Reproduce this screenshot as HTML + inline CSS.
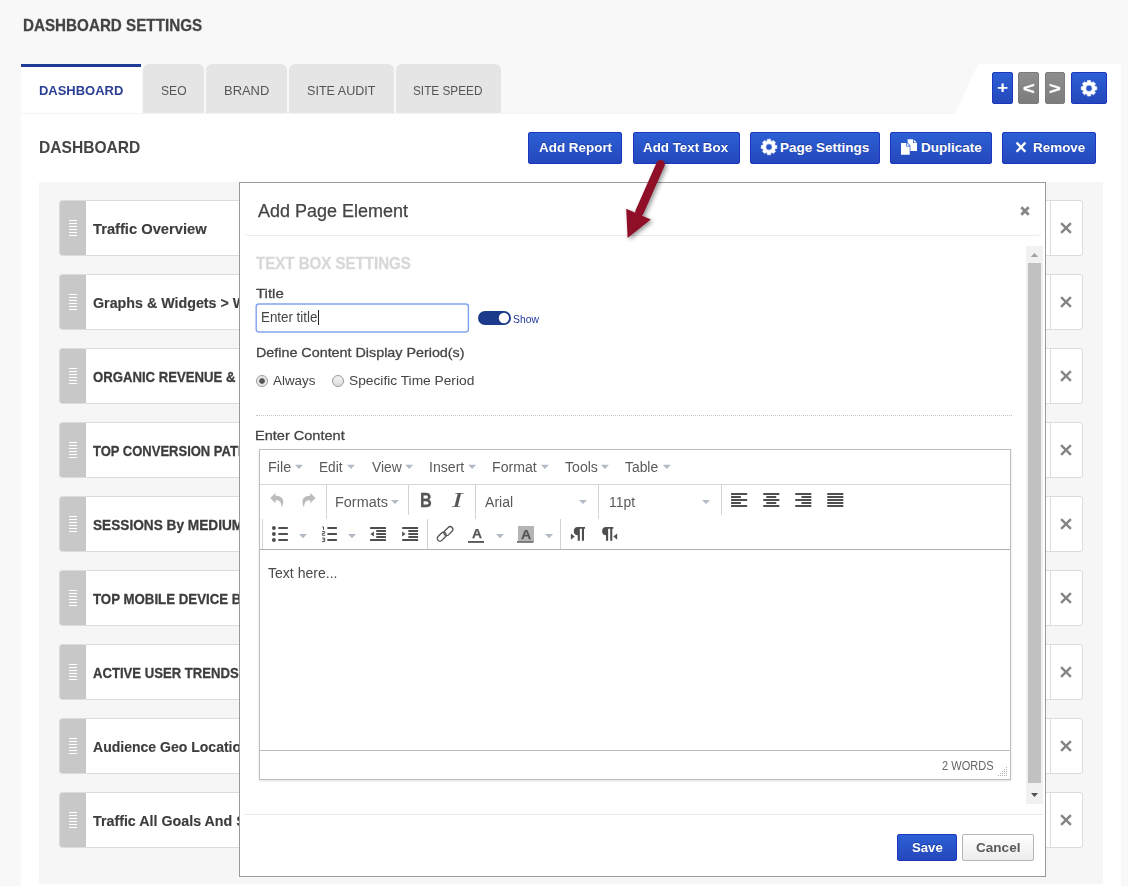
<!DOCTYPE html><html lang="en"><head><meta charset="utf-8"><title>Dashboard Settings</title><style>
html,body{margin:0;padding:0}
body{width:1128px;height:886px;background:#f8f8f8;position:relative;overflow:hidden;font-family:'Liberation Sans',Arial,sans-serif;font-size:13px;color:#444}
.t{position:absolute;white-space:pre;line-height:1;transform-origin:0 0;display:block}
.a{position:absolute;box-sizing:border-box}
.tab{position:absolute;top:64px;height:49px;background:#e5e5e5;border-radius:6px 6px 0 0}
.bb{position:absolute;box-sizing:border-box;border:1px solid #1c36c0;border-radius:2px;background:linear-gradient(#2d5fd5,#2448bb)}
.gb{position:absolute;box-sizing:border-box;border:1px solid #7b7b7b;border-radius:2px;background:linear-gradient(#8e8e8e,#7c7c7c)}
.row{position:absolute;left:59px;width:1024px;height:56px;box-sizing:border-box;background:#fff;border:1px solid #dcdcdc;border-radius:3px}
.row .h{position:absolute;left:0;top:0;width:26px;height:54px;background:#c8c8c8;border-radius:2px 0 0 2px}
.row .g{position:absolute;left:9px;top:19px;width:8px;height:16px;background:repeating-linear-gradient(#fff 0,#fff 1px,transparent 1px,transparent 3px)}
.row .c{position:absolute;right:31px;top:0;width:1px;height:54px;background:#dcdcdc}
svg{position:absolute;overflow:visible}
.sep{position:absolute;width:1px;background:#d2d3d6}
.sh{text-shadow:0 -1px 0 rgba(0,0,40,.28)}
.sb{-webkit-text-stroke:0.45px currentColor}
</style></head><body>
<span class="t" style="left:23.31px;top:17.30px;font-size:17px;font-weight:bold;color:#444;transform:scaleX(0.8946);-webkit-text-stroke:0.28px #444;">DASHBOARD SETTINGS</span>
<div class="a" style="left:21px;top:64px;width:120px;height:49px;background:#fff;border-top:3px solid #1e3c96"></div>
<div class="tab" style="left:143px;width:61px"></div>
<div class="tab" style="left:206px;width:81px"></div>
<div class="tab" style="left:289px;width:105px"></div>
<div class="tab" style="left:396px;width:105px"></div>
<span class="t" style="left:38.75px;top:84.30px;font-size:13px;font-weight:bold;color:#2a3f94;transform:scaleX(0.9970);">DASHBOARD</span>
<span class="t" style="left:160.60px;top:84.30px;font-size:13px;color:#555;transform:scaleX(0.9308);">SEO</span>
<span class="t" style="left:224.00px;top:84.30px;font-size:13px;color:#555;transform:scaleX(0.9955);">BRAND</span>
<span class="t" style="left:306.77px;top:84.30px;font-size:13px;color:#555;transform:scaleX(0.9677);">SITE AUDIT</span>
<span class="t" style="left:413.12px;top:84.30px;font-size:13px;color:#555;transform:scaleX(0.9063);">SITE SPEED</span>
<div class="a" style="left:21px;top:113px;width:1100px;height:773px;background:#fff;border-top:1px solid #f4f4f4"></div>
<div class="a" style="left:955px;top:64px;width:166px;height:50px;background:#fff;clip-path:polygon(23px 0,100% 0,100% 100%,0 100%)"></div>
<div class="bb" style="left:992px;top:72px;width:21px;height:32px"></div>
<div class="gb" style="left:1018px;top:72px;width:21px;height:32px"></div>
<div class="gb" style="left:1045px;top:72px;width:20px;height:32px"></div>
<div class="bb" style="left:1071px;top:72px;width:36px;height:32px"></div>
<span class="t" style="left:996.85px;top:78.70px;font-size:17px;font-weight:bold;color:#fff;transform:scaleX(1.1294);">+</span>
<span class="t" style="left:1023.11px;top:80.00px;font-size:17px;font-weight:bold;color:#fff;transform:scaleX(1.1889);-webkit-text-stroke:0.3px #fff;">&lt;</span>
<span class="t" style="left:1049.01px;top:80.00px;font-size:17px;font-weight:bold;color:#fff;transform:scaleX(1.1889);-webkit-text-stroke:0.3px #fff;">&gt;</span>
<span class="t" style="left:38.65px;top:138.90px;font-size:17px;font-weight:bold;color:#444;transform:scaleX(0.9171);">DASHBOARD</span>
<div class="bb" style="left:528px;top:132px;width:94px;height:32px"></div>
<div class="bb" style="left:633px;top:132px;width:107px;height:32px"></div>
<div class="bb" style="left:750px;top:132px;width:130px;height:32px"></div>
<div class="bb" style="left:890px;top:132px;width:102px;height:32px"></div>
<div class="bb" style="left:1002px;top:132px;width:94px;height:32px"></div>
<span class="t" style="left:538.65px;top:140.50px;font-size:13.5px;font-weight:bold;color:#fff;transform:scaleX(0.9945);text-shadow:0 -1px 0 rgba(0,0,40,.28);">Add Report</span>
<span class="t" style="left:643.35px;top:140.50px;font-size:13.5px;font-weight:bold;color:#fff;transform:scaleX(0.9895);text-shadow:0 -1px 0 rgba(0,0,40,.28);">Add Text Box</span>
<span class="t" style="left:780.10px;top:140.50px;font-size:13.5px;font-weight:bold;color:#fff;text-shadow:0 -1px 0 rgba(0,0,40,.28);">Page Settings</span>
<span class="t" style="left:921.10px;top:140.50px;font-size:13.5px;font-weight:bold;color:#fff;text-shadow:0 -1px 0 rgba(0,0,40,.28);">Duplicate</span>
<span class="t" style="left:1033.40px;top:140.50px;font-size:13.5px;font-weight:bold;color:#fff;transform:scaleX(0.9961);text-shadow:0 -1px 0 rgba(0,0,40,.28);">Remove</span>
<svg width="1128" height="886" style="left:0;top:0;pointer-events:none"><path d="M1087.24 82.25 L1087.46 80.55 L1090.54 80.55 L1090.76 82.25 L1092.04 82.78 L1093.39 81.73 L1095.57 83.91 L1094.52 85.26 L1095.05 86.54 L1096.75 86.76 L1096.75 89.84 L1095.05 90.06 L1094.52 91.34 L1095.57 92.69 L1093.39 94.87 L1092.04 93.82 L1090.76 94.35 L1090.54 96.05 L1087.46 96.05 L1087.24 94.35 L1085.96 93.82 L1084.61 94.87 L1082.43 92.69 L1083.48 91.34 L1082.95 90.06 L1081.25 89.84 L1081.25 86.76 L1082.95 86.54 L1083.48 85.26 L1082.43 83.91 L1084.61 81.73 L1085.96 82.78Z M1085.80 88.30 a3.2 3.2 0 1 0 6.4 0 a3.2 3.2 0 1 0 -6.4 0Z" fill="#fff" fill-rule="evenodd" stroke="#fff" stroke-width="0.6" stroke-linejoin="round"/><path d="M767.24 140.95 L767.46 139.25 L770.54 139.25 L770.76 140.95 L772.04 141.48 L773.39 140.43 L775.57 142.61 L774.52 143.96 L775.05 145.24 L776.75 145.46 L776.75 148.54 L775.05 148.76 L774.52 150.04 L775.57 151.39 L773.39 153.57 L772.04 152.52 L770.76 153.05 L770.54 154.75 L767.46 154.75 L767.24 153.05 L765.96 152.52 L764.61 153.57 L762.43 151.39 L763.48 150.04 L762.95 148.76 L761.25 148.54 L761.25 145.46 L762.95 145.24 L763.48 143.96 L762.43 142.61 L764.61 140.43 L765.96 141.48Z M765.80 147.00 a3.2 3.2 0 1 0 6.4 0 a3.2 3.2 0 1 0 -6.4 0Z" fill="#fff" fill-rule="evenodd" stroke="#fff" stroke-width="0.6" stroke-linejoin="round"/><path d="M901 143h5.3v3.6h3.4v8.2h-8.7z M907.1 143.1l2.5 2.7h-2.5z" fill="#fff"/><path d="M907.6 139.3h5.4v3.6h4v8h-6.6v-5.3l-2.8-3z M913.8 139.4l3 3h-3z" fill="#fff"/><path d="M1016.6 142.6l8.8 9.2M1025.4 142.6l-8.8 9.2" stroke="#fff" stroke-width="2.3" fill="none"/></svg>
<div class="a" style="left:39px;top:182px;width:1064px;height:702px;background:#f6f6f6"></div>
<div class="row" style="top:200px"><div class="h"><div class="g"></div></div><div class="c"></div><svg width="12" height="12" style="right:9.8px;top:21.4px" viewBox="0 0 12 12"><path d="M1.1 1.1l9.8 9.8M10.9 1.1L1.1 10.9" stroke="#858585" stroke-width="2.4" fill="none"/></svg></div>
<span class="t" style="left:93.20px;top:220.80px;font-size:15.2px;font-weight:bold;color:#3d3d3d;transform:scaleX(0.9685);-webkit-text-stroke:0.15px #3d3d3d;">Traffic Overview</span>
<div class="row" style="top:274px"><div class="h"><div class="g"></div></div><div class="c"></div><svg width="12" height="12" style="right:9.8px;top:21.4px" viewBox="0 0 12 12"><path d="M1.1 1.1l9.8 9.8M10.9 1.1L1.1 10.9" stroke="#858585" stroke-width="2.4" fill="none"/></svg></div>
<span class="t" style="left:92.73px;top:294.80px;font-size:15.2px;font-weight:bold;color:#3d3d3d;transform:scaleX(0.9394);-webkit-text-stroke:0.15px #3d3d3d;">Graphs &amp; Widgets &gt; Widgets</span>
<div class="row" style="top:348px"><div class="h"><div class="g"></div></div><div class="c"></div><svg width="12" height="12" style="right:9.8px;top:21.4px" viewBox="0 0 12 12"><path d="M1.1 1.1l9.8 9.8M10.9 1.1L1.1 10.9" stroke="#858585" stroke-width="2.4" fill="none"/></svg></div>
<span class="t" style="left:92.75px;top:369.80px;font-size:14.7px;font-weight:bold;color:#3d3d3d;transform:scaleX(0.8954);-webkit-text-stroke:0.3px #3d3d3d;">ORGANIC REVENUE &amp; CONVERSIONS</span>
<div class="row" style="top:422px"><div class="h"><div class="g"></div></div><div class="c"></div><svg width="12" height="12" style="right:9.8px;top:21.4px" viewBox="0 0 12 12"><path d="M1.1 1.1l9.8 9.8M10.9 1.1L1.1 10.9" stroke="#858585" stroke-width="2.4" fill="none"/></svg></div>
<span class="t" style="left:93.20px;top:443.80px;font-size:14.7px;font-weight:bold;color:#3d3d3d;transform:scaleX(0.8849);-webkit-text-stroke:0.3px #3d3d3d;">TOP CONVERSION PATHS</span>
<div class="row" style="top:496px"><div class="h"><div class="g"></div></div><div class="c"></div><svg width="12" height="12" style="right:9.8px;top:21.4px" viewBox="0 0 12 12"><path d="M1.1 1.1l9.8 9.8M10.9 1.1L1.1 10.9" stroke="#858585" stroke-width="2.4" fill="none"/></svg></div>
<span class="t" style="left:92.97px;top:517.80px;font-size:14.7px;font-weight:bold;color:#3d3d3d;transform:scaleX(0.9293);-webkit-text-stroke:0.3px #3d3d3d;">SESSIONS By MEDIUM</span>
<div class="row" style="top:570px"><div class="h"><div class="g"></div></div><div class="c"></div><svg width="12" height="12" style="right:9.8px;top:21.4px" viewBox="0 0 12 12"><path d="M1.1 1.1l9.8 9.8M10.9 1.1L1.1 10.9" stroke="#858585" stroke-width="2.4" fill="none"/></svg></div>
<span class="t" style="left:93.20px;top:591.80px;font-size:14.7px;font-weight:bold;color:#3d3d3d;transform:scaleX(0.9032);-webkit-text-stroke:0.3px #3d3d3d;">TOP MOBILE DEVICE BRANDS</span>
<div class="row" style="top:644px"><div class="h"><div class="g"></div></div><div class="c"></div><svg width="12" height="12" style="right:9.8px;top:21.4px" viewBox="0 0 12 12"><path d="M1.1 1.1l9.8 9.8M10.9 1.1L1.1 10.9" stroke="#858585" stroke-width="2.4" fill="none"/></svg></div>
<span class="t" style="left:92.98px;top:665.80px;font-size:14.7px;font-weight:bold;color:#3d3d3d;transform:scaleX(0.8923);-webkit-text-stroke:0.3px #3d3d3d;">ACTIVE USER TRENDS</span>
<div class="row" style="top:718px"><div class="h"><div class="g"></div></div><div class="c"></div><svg width="12" height="12" style="right:9.8px;top:21.4px" viewBox="0 0 12 12"><path d="M1.1 1.1l9.8 9.8M10.9 1.1L1.1 10.9" stroke="#858585" stroke-width="2.4" fill="none"/></svg></div>
<span class="t" style="left:92.97px;top:738.80px;font-size:15.2px;font-weight:bold;color:#3d3d3d;transform:scaleX(0.9235);-webkit-text-stroke:0.15px #3d3d3d;">Audience Geo Location</span>
<div class="row" style="top:792px"><div class="h"><div class="g"></div></div><div class="c"></div><svg width="12" height="12" style="right:9.8px;top:21.4px" viewBox="0 0 12 12"><path d="M1.1 1.1l9.8 9.8M10.9 1.1L1.1 10.9" stroke="#858585" stroke-width="2.4" fill="none"/></svg></div>
<span class="t" style="left:93.20px;top:812.80px;font-size:15.2px;font-weight:bold;color:#3d3d3d;transform:scaleX(0.9392);-webkit-text-stroke:0.15px #3d3d3d;">Traffic All Goals And Sources</span>
<div class="a" id="modal" style="left:239px;top:182px;width:807px;height:695px;background:#fff;border:1px solid #9a9a9a">
<div class="a" style="left:4px;top:4px;width:798px;height:49px;border-bottom:1px solid #ebebeb;border-radius:5px"></div>
<div class="a" style="left:4px;top:631px;width:799px;height:1px;background:#ebebeb"></div>
</div>
<span class="t" style="left:258.30px;top:203.10px;font-size:17.5px;color:#444;transform:scaleX(1.0281);-webkit-text-stroke:0.25px #444;">Add Page Element</span>
<svg width="10" height="10" style="left:1019.7px;top:205.6px" viewBox="0 0 10 10"><path d="M1.3 1.3l7.4 7.4M8.7 1.3L1.3 8.7" stroke="#858585" stroke-width="2.8" fill="none"/></svg>
<span class="t" style="left:256.30px;top:254.90px;font-size:16.5px;font-weight:bold;color:#d8d8d8;transform:scaleX(0.9129);-webkit-text-stroke:0.3px #d8d8d8;">TEXT BOX SETTINGS</span>
<span class="t" style="left:256.11px;top:287.00px;font-size:13px;color:#444;transform:scaleX(1.1532);-webkit-text-stroke:0.28px #444;">Title</span>
<svg width="220" height="34" style="left:253px;top:301px"><rect x="3.2" y="2.9" width="212.2" height="28" rx="2.6" fill="#fff" stroke="#83a4ee" stroke-width="1.45"/></svg>
<span class="t" style="left:261.41px;top:310.00px;font-size:14px;color:#444;transform:scaleX(0.9537);">Enter title</span>
<div class="a" style="left:318px;top:310px;width:1px;height:15px;background:#222"></div>
<div class="a" style="left:478px;top:311px;width:33px;height:14px;border-radius:7px;background:#1c3a8c"></div>
<svg width="12" height="12" style="left:498px;top:312px"><circle cx="5.9" cy="6" r="5.15" fill="#fdfdff"/></svg>
<span class="t" style="left:512.93px;top:314.00px;font-size:11px;color:#25399a;transform:scaleX(0.9407);">Show</span>
<span class="t" style="left:255.50px;top:346.10px;font-size:13px;color:#444;transform:scaleX(1.1015);-webkit-text-stroke:0.28px #444;">Define Content Display Period(s)</span>
<div class="a" style="left:256px;top:375px;width:12px;height:12px;border-radius:6px;border:1px solid #9a9a9a;background:radial-gradient(circle,#555 0,#555 2.4px,#e6e6e6 3.2px,#efefef 100%)"></div>
<div class="a" style="left:332px;top:375px;width:12px;height:12px;border-radius:6px;border:1px solid #9a9a9a;background:linear-gradient(#f3f3f3,#dcdcdc)"></div>
<span class="t" style="left:272.90px;top:374.10px;font-size:13px;color:#444;transform:scaleX(1.0307);">Always</span>
<span class="t" style="left:348.71px;top:374.10px;font-size:13px;color:#444;transform:scaleX(1.0573);">Specific Time Period</span>
<div class="a" style="left:256px;top:415px;width:756px;height:0;border-top:1px dotted #c4c4c4"></div>
<span class="t" style="left:255.48px;top:429.00px;font-size:13px;color:#444;transform:scaleX(1.1180);-webkit-text-stroke:0.28px #444;">Enter Content</span>
<div class="a" style="left:259px;top:449px;width:752px;height:331px;background:#fff;border:1px solid #bdbdbd;box-shadow:0 1px 2px rgba(0,0,0,.12)"></div>
<div class="a" style="left:260px;top:484px;width:750px;height:1px;background:#d9d9d9"></div>
<div class="a" style="left:260px;top:549px;width:750px;height:1px;background:#b0b0b0"></div>
<div class="a" style="left:260px;top:750px;width:750px;height:1px;background:#bdbdbd"></div>
<span class="t" style="left:268.31px;top:459.80px;font-size:14px;color:#5a5a5a;transform:scaleX(1.0313);">File</span>
<span class="t" style="left:319.38px;top:459.80px;font-size:14px;color:#5a5a5a;transform:scaleX(0.9758);">Edit</span>
<span class="t" style="left:371.55px;top:459.80px;font-size:14px;color:#5a5a5a;transform:scaleX(0.9882);">View</span>
<span class="t" style="left:429.04px;top:459.80px;font-size:14px;color:#5a5a5a;transform:scaleX(1.0074);">Insert</span>
<span class="t" style="left:491.74px;top:459.80px;font-size:14px;color:#5a5a5a;transform:scaleX(1.0093);">Format</span>
<span class="t" style="left:564.55px;top:459.80px;font-size:14px;color:#5a5a5a;transform:scaleX(1.0063);">Tools</span>
<span class="t" style="left:625.35px;top:459.80px;font-size:14px;color:#5a5a5a;transform:scaleX(0.9908);">Table</span>
<div class="sep" style="left:326px;top:485px;height:34px"></div>
<div class="sep" style="left:408px;top:485px;height:30px"></div>
<div class="sep" style="left:475px;top:485px;height:34px"></div>
<div class="sep" style="left:598px;top:485px;height:34px"></div>
<div class="sep" style="left:721px;top:485px;height:30px"></div>
<div class="sep" style="left:262px;top:519px;height:30px"></div>
<div class="sep" style="left:427px;top:519px;height:30px"></div>
<div class="sep" style="left:560px;top:519px;height:30px"></div>
<span class="t" style="left:334.71px;top:495.00px;font-size:14px;color:#5a5a5a;transform:scaleX(1.0303);">Formats</span>
<span class="t" style="left:485.20px;top:495.00px;font-size:14px;color:#5a5a5a;transform:scaleX(1.0074);">Arial</span>
<span class="t" style="left:608.71px;top:495.00px;font-size:14px;color:#5a5a5a;transform:scaleX(0.9920);">11pt</span>
<span class="t" style="left:420.18px;top:489.90px;font-size:20px;font-weight:bold;color:#555;transform:scaleX(0.8160);-webkit-text-stroke:0.3px #555;">B</span>
<span class="t" style="left:452.37px;top:490.00px;font-size:21px;font-style:italic;font-family:'Liberation Serif', 'Times New Roman', serif;color:#555;transform:scaleX(1.4909);-webkit-text-stroke:0.15px #555;">I</span>
<span class="t" style="left:471.94px;top:527.30px;font-size:13.5px;font-weight:bold;color:#555;transform:scaleX(1.0270);-webkit-text-stroke:0.25px #555;">A</span>
<div class="a" style="left:518px;top:526px;width:16px;height:16px;background:#b5b5b5"></div>
<span class="t" style="left:520.84px;top:527.50px;font-size:13.5px;font-weight:bold;color:#555;transform:scaleX(1.0486);-webkit-text-stroke:0.25px #555;">A</span>
<svg width="1128" height="886" style="left:0;top:0;pointer-events:none"><path d="M295.0 464.8h8l-4 4.2z" fill="#b2bac5"/><path d="M347.0 464.8h8l-4 4.2z" fill="#b2bac5"/><path d="M405.2 464.8h8l-4 4.2z" fill="#b2bac5"/><path d="M468.2 464.8h8l-4 4.2z" fill="#b2bac5"/><path d="M540.9 464.8h8l-4 4.2z" fill="#b2bac5"/><path d="M600.9 464.8h8l-4 4.2z" fill="#b2bac5"/><path d="M662.8 464.8h8l-4 4.2z" fill="#b2bac5"/><path d="M391 499.9h8l-4 4.2z" fill="#b2bac5"/><path d="M579 499.9h8l-4 4.2z" fill="#b2bac5"/><path d="M702 499.9h8l-4 4.2z" fill="#b2bac5"/><path d="M299 534h8l-4 4.2z" fill="#b2bac5"/><path d="M348 534h8l-4 4.2z" fill="#b2bac5"/><path d="M496 534h8l-4 4.2z" fill="#b2bac5"/><path d="M545.1 534h8l-4 4.2z" fill="#b2bac5"/><path d="M5.4 0.3 L0 5.4 L5.4 10.6 V7.6 C9 7.4 11.2 9 11.6 14.8 C14.6 9.5 13.8 3.3 5.4 3.2 Z" transform="translate(270.1 492.6)" fill="#bcbcbc"/><path d="M5.4 0.3 L0 5.4 L5.4 10.6 V7.6 C9 7.4 11.2 9 11.6 14.8 C14.6 9.5 13.8 3.3 5.4 3.2 Z" transform="translate(315.6 492.6) scale(-1 1)" fill="#bcbcbc"/><rect x="731" y="493.00" width="16.2" height="2" rx="0.6" fill="#4f4f4f"/><rect x="731" y="496.00" width="10" height="2" rx="0.6" fill="#4f4f4f"/><rect x="731" y="499.00" width="16.2" height="2" rx="0.6" fill="#4f4f4f"/><rect x="731" y="502.00" width="10" height="2" rx="0.6" fill="#4f4f4f"/><rect x="731" y="505.00" width="16.2" height="2" rx="0.6" fill="#4f4f4f"/><rect x="763.2" y="493.00" width="16.2" height="2" rx="0.6" fill="#4f4f4f"/><rect x="766.3000000000001" y="496.00" width="10" height="2" rx="0.6" fill="#4f4f4f"/><rect x="763.2" y="499.00" width="16.2" height="2" rx="0.6" fill="#4f4f4f"/><rect x="766.3000000000001" y="502.00" width="10" height="2" rx="0.6" fill="#4f4f4f"/><rect x="763.2" y="505.00" width="16.2" height="2" rx="0.6" fill="#4f4f4f"/><rect x="795.2" y="493.00" width="16.2" height="2" rx="0.6" fill="#4f4f4f"/><rect x="801.4000000000001" y="496.00" width="10" height="2" rx="0.6" fill="#4f4f4f"/><rect x="795.2" y="499.00" width="16.2" height="2" rx="0.6" fill="#4f4f4f"/><rect x="801.4000000000001" y="502.00" width="10" height="2" rx="0.6" fill="#4f4f4f"/><rect x="795.2" y="505.00" width="16.2" height="2" rx="0.6" fill="#4f4f4f"/><rect x="827.2" y="493.00" width="16.2" height="2" rx="0.6" fill="#4f4f4f"/><rect x="827.2" y="496.00" width="16.2" height="2" rx="0.6" fill="#4f4f4f"/><rect x="827.2" y="499.00" width="16.2" height="2" rx="0.6" fill="#4f4f4f"/><rect x="827.2" y="502.00" width="16.2" height="2" rx="0.6" fill="#4f4f4f"/><rect x="827.2" y="505.00" width="16.2" height="2" rx="0.6" fill="#4f4f4f"/><circle cx="273.9" cy="528" r="1.95" fill="#4f4f4f"/><rect x="278.2" y="526.9" width="9.8" height="2.2" rx="0.8" fill="#4f4f4f"/><rect x="327.2" y="526.9" width="9.9" height="2.2" rx="0.8" fill="#4f4f4f"/><circle cx="273.9" cy="534" r="1.95" fill="#4f4f4f"/><rect x="278.2" y="532.9" width="9.8" height="2.2" rx="0.8" fill="#4f4f4f"/><rect x="327.2" y="532.9" width="9.9" height="2.2" rx="0.8" fill="#4f4f4f"/><circle cx="273.9" cy="540" r="1.95" fill="#4f4f4f"/><rect x="278.2" y="538.9" width="9.8" height="2.2" rx="0.8" fill="#4f4f4f"/><rect x="327.2" y="538.9" width="9.9" height="2.2" rx="0.8" fill="#4f4f4f"/><path d="M322.2 526.9h1.3v3 M322.1 531.6h2.6v1.8h-2.3v1.9h2.8 M322.1 538.1h2.6v3.5h-2.7M322.8 539.8h1.9" stroke="#4f4f4f" stroke-width="0.95" fill="none"/><rect x="370" y="527.00" width="16" height="2" rx="0.6" fill="#4f4f4f"/><rect x="376.2" y="530.00" width="9.8" height="2" rx="0.6" fill="#4f4f4f"/><rect x="376.2" y="533.00" width="9.8" height="2" rx="0.6" fill="#4f4f4f"/><rect x="376.2" y="536.00" width="9.8" height="2" rx="0.6" fill="#4f4f4f"/><rect x="370" y="539.00" width="16" height="2" rx="0.6" fill="#4f4f4f"/><path d="M373.9 531.4v5.2l-3.5-2.6z" fill="#4f4f4f"/><rect x="402.1" y="527.00" width="16" height="2" rx="0.6" fill="#4f4f4f"/><rect x="408.3" y="530.00" width="9.8" height="2" rx="0.6" fill="#4f4f4f"/><rect x="408.3" y="533.00" width="9.8" height="2" rx="0.6" fill="#4f4f4f"/><rect x="408.3" y="536.00" width="9.8" height="2" rx="0.6" fill="#4f4f4f"/><rect x="402.1" y="539.00" width="16" height="2" rx="0.6" fill="#4f4f4f"/><path d="M402.1 531.4v5.2l3.5-2.6z" fill="#4f4f4f"/><g transform="translate(445.05 533.9) rotate(-45)" fill="none" stroke="#4f4f4f" stroke-width="1.2"><rect x="-9.5" y="-3.1" width="10.4" height="5.4" rx="2.7"/><rect x="-0.9" y="-2.3" width="10.4" height="5.4" rx="2.7"/></g><rect x="468" y="541" width="16" height="1.9" fill="#5a5a5a"/><rect x="517" y="541" width="16.4" height="1.9" fill="#777"/><path d="M578.1 527H585.05v1.8H584V540.8H581.9V528.8H579.85V540.8H577.7V535.2A4.1 4.1 0 0 1 578.1 527z" fill="#4f4f4f"/><path d="M570.9 533.5v6.2l3.8 -3.1z" fill="#4f4f4f"/><path d="M606.4 527H613.3499999999999v1.8H612.3V540.8H610.1999999999999V528.8H608.15V540.8H606.0V535.2A4.1 4.1 0 0 1 606.4 527z" fill="#4f4f4f"/><path d="M617.2 533.5v6.2l-3.8 -3.1z" fill="#4f4f4f"/><rect x="1006.0" y="775.0" width="1" height="1" fill="#b0b0b0"/><rect x="1006.0" y="773.0" width="1" height="1" fill="#b0b0b0"/><rect x="1004.0" y="775.0" width="1" height="1" fill="#b0b0b0"/><rect x="1006.0" y="771.0" width="1" height="1" fill="#b0b0b0"/><rect x="1004.0" y="773.0" width="1" height="1" fill="#b0b0b0"/><rect x="1002.0" y="775.0" width="1" height="1" fill="#b0b0b0"/><rect x="1006.0" y="769.0" width="1" height="1" fill="#b0b0b0"/><rect x="1004.0" y="771.0" width="1" height="1" fill="#b0b0b0"/><rect x="1002.0" y="773.0" width="1" height="1" fill="#b0b0b0"/><rect x="1000.0" y="775.0" width="1" height="1" fill="#b0b0b0"/><rect x="1006.0" y="767.0" width="1" height="1" fill="#b0b0b0"/><rect x="1004.0" y="769.0" width="1" height="1" fill="#b0b0b0"/><rect x="1002.0" y="771.0" width="1" height="1" fill="#b0b0b0"/><rect x="1000.0" y="773.0" width="1" height="1" fill="#b0b0b0"/><rect x="998.0" y="775.0" width="1" height="1" fill="#b0b0b0"/></svg>
<span class="t" style="left:268.15px;top:566.00px;font-size:14px;color:#4a4a4a;transform:scaleX(1.0037);">Text here...</span>
<span class="t" style="left:942.34px;top:759.60px;font-size:12px;color:#666;transform:scaleX(0.9200);">2 WORDS</span>
<div class="a" style="left:1026px;top:246px;width:17px;height:558px;background:#f1f1f1"></div>
<div class="a" style="left:1028px;top:263px;width:13px;height:520px;background:#c1c1c1"></div>
<svg width="17" height="17" style="left:1026px;top:246px"><path d="M4.8 11l3.7-4 3.7 4z" fill="#a3a3a3"/></svg>
<svg width="17" height="17" style="left:1026px;top:787px"><path d="M5 6l3.5 4 3.5-4z" fill="#505050"/></svg>
<div class="bb" style="left:897px;top:834px;width:60px;height:27px"></div>
<div class="a" style="left:962px;top:834px;width:72px;height:27px;border:1px solid #b5b5b5;border-radius:2px;background:linear-gradient(#fff,#ececec)"></div>
<span class="t" style="left:911.69px;top:840.60px;font-size:13px;font-weight:bold;color:#fff;transform:scaleX(1.0136);text-shadow:0 -1px 0 rgba(0,0,40,.28);">Save</span>
<span class="t" style="left:976.08px;top:840.60px;font-size:13px;font-weight:bold;color:#5a5a5a;transform:scaleX(1.0424);">Cancel</span>
<svg width="1128" height="886" style="left:0;top:0;pointer-events:none;filter:drop-shadow(2px 2px 2px rgba(0,0,0,.4))"><path d="M660.6 164.3L639.5 212" stroke="#8f0f28" stroke-width="8.6" stroke-linecap="round" fill="none"/><path d="M626.2 208.7L650.8 219.4L627.6 238z" fill="#8f0f28"/></svg>
</body></html>
